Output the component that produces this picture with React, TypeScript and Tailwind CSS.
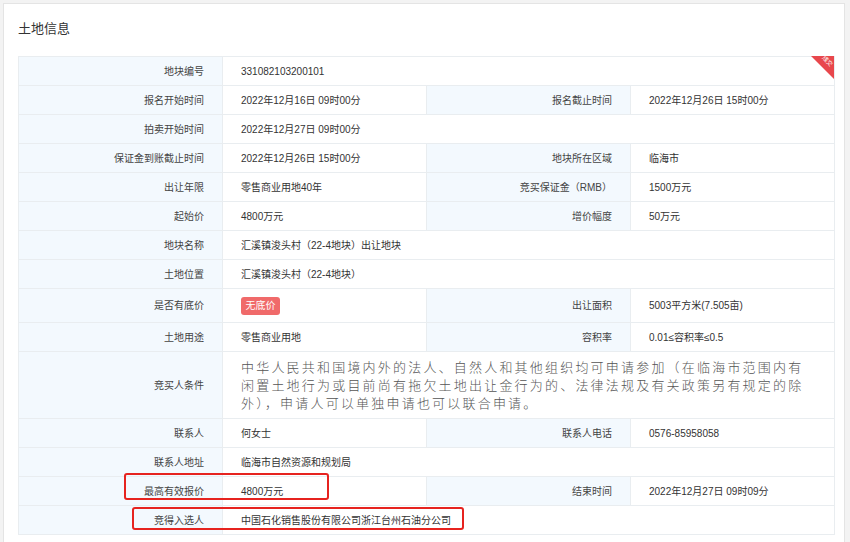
import React from "react";

type Row =
  | { kind: "full"; label: string; value: React.ReactNode; h?: string; cond?: boolean }
  | { kind: "pair"; l1: string; v1: React.ReactNode; l2: string; v2: React.ReactNode; h?: string };

const rows: Row[] = [
  { kind: "full", label: "地块编号", value: "331082103200101" },
  { kind: "pair", l1: "报名开始时间", v1: "2022年12月16日 09时00分", l2: "报名截止时间", v2: "2022年12月26日 15时00分" },
  { kind: "full", label: "拍卖开始时间", value: "2022年12月27日 09时00分" },
  { kind: "pair", l1: "保证金到账截止时间", v1: "2022年12月26日 15时00分", l2: "地块所在区域", v2: "临海市" },
  { kind: "pair", l1: "出让年限", v1: "零售商业用地40年", l2: "竞买保证金（RMB）", v2: "1500万元" },
  { kind: "pair", l1: "起始价", v1: "4800万元", l2: "增价幅度", v2: "50万元" },
  { kind: "full", label: "地块名称", value: "汇溪镇浚头村（22-4地块）出让地块" },
  { kind: "full", label: "土地位置", value: "汇溪镇浚头村（22-4地块）" },
  {
    kind: "pair",
    l1: "是否有底价",
    v1: (
      <span className="inline-flex h-[18px] w-[39px] items-center justify-center rounded-[3px] bg-[#f06a6a] text-[10px] text-white">
        无底价
      </span>
    ),
    l2: "出让面积",
    v2: "5003平方米(7.505亩)",
    h: "h-[34px]",
  },
  { kind: "pair", l1: "土地用途", v1: "零售商业用地", l2: "容积率", v2: "0.01≤容积率≤0.5" },
  {
    kind: "full",
    label: "竞买人条件",
    value:
      "中华人民共和国境内外的法人、自然人和其他组织均可申请参加（在临海市范围内有闲置土地行为或目前尚有拖欠土地出让金行为的、法律法规及有关政策另有规定的除外），申请人可以单独申请也可以联合申请。",
    h: "h-[67px]",
    cond: true,
  },
  { kind: "pair", l1: "联系人", v1: "何女士", l2: "联系人电话", v2: "0576-85958058" },
  { kind: "full", label: "联系人地址", value: "临海市自然资源和规划局" },
  { kind: "pair", l1: "最高有效报价", v1: "4800万元", l2: "结束时间", v2: "2022年12月27日 09时09分" },
  { kind: "full", label: "竞得入选人", value: "中国石化销售股份有限公司浙江台州石油分公司" },
];

const labelCls =
  "border border-[#e9edf0] bg-[#f3f9fe] pr-[18px] text-right align-middle text-[10px] text-[#444]";
const valueCls = "border border-[#e9edf0] bg-white pl-[18px] text-left align-middle text-[10px] text-[#333]";

export default function App() {
  return (
    <div
      className="relative min-h-[542px] bg-[#f3f3f3] pl-[3px] pr-[5px] pt-[3px]"
      style={{ fontFamily: '"Liberation Sans", "Noto Sans CJK SC", sans-serif' }}
    >
      <div className="min-h-[560px] border border-[#e4e4e4] bg-white pl-[14px] pr-[10px] pt-[16px]">
        <div className="mb-[18px] h-[18px] text-[13px] leading-[18px] text-[#333]">土地信息</div>
        <div className="relative">
          <table className="w-[816px] table-fixed border-collapse">
            <colgroup>
              <col className="w-[204px]" />
              <col className="w-[204px]" />
              <col className="w-[204px]" />
              <col className="w-[204px]" />
            </colgroup>
            <tbody>
              {rows.map((r, i) =>
                r.kind === "full" ? (
                  <tr key={i} className={r.h ?? "h-[29px]"}>
                    <td className={labelCls}>{r.label}</td>
                    <td colSpan={3} className={valueCls}>
                      {r.cond ? (
                        <div
                          className="w-[570px] text-[13px] leading-[18px] tracking-[2.2px] text-[#555]"
                          style={{ fontFamily: '"Noto Sans CJK SC", sans-serif', fontWeight: 300 }}
                        >
                          {r.value}
                        </div>
                      ) : (
                        r.value
                      )}
                    </td>
                  </tr>
                ) : (
                  <tr key={i} className={r.h ?? "h-[29px]"}>
                    <td className={labelCls}>{r.l1}</td>
                    <td className={valueCls}>{r.v1}</td>
                    <td className={labelCls}>{r.l2}</td>
                    <td className={valueCls}>{r.v2}</td>
                  </tr>
                )
              )}
            </tbody>
          </table>
          <div className="absolute right-0 top-0 h-[23px] w-[23px] overflow-hidden">
            <svg width="23" height="23" viewBox="0 0 23 23" className="absolute left-0 top-0">
              <polygon points="0,0 23,0 23,23" fill="#e8474c" />
            </svg>
            <span className="absolute left-[10px] top-[2px] rotate-45 text-[6px] leading-[7px] text-white">成交</span>
          </div>
        </div>
      </div>
      <div className="absolute left-[124px] top-[473px] h-[27px] w-[205px] rounded-[3px] border-2 border-[#e6231f]" />
      <div className="absolute left-[132px] top-[507px] h-[23px] w-[332px] rounded-[3px] border-2 border-[#e6231f]" />
    </div>
  );
}
